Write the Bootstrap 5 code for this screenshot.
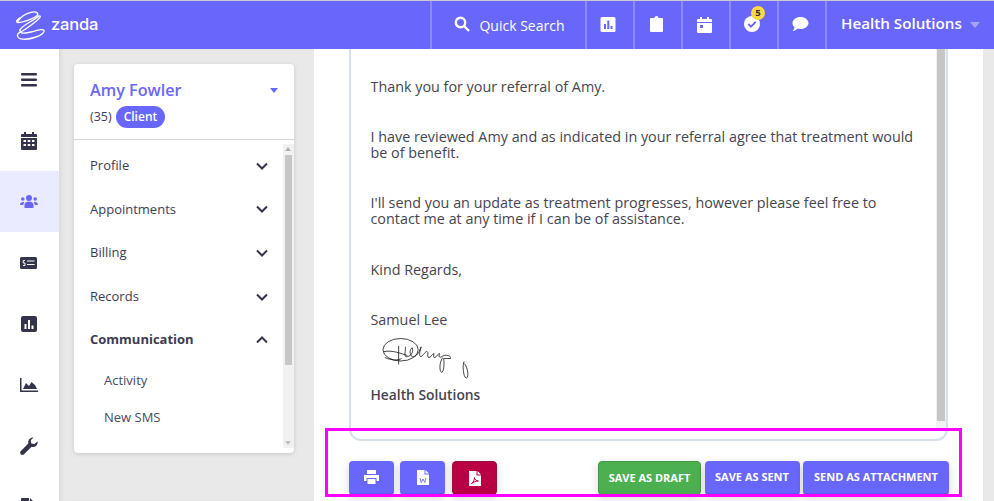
<!DOCTYPE html>
<html lang="en"><head><meta charset="utf-8"><title>Zanda</title>
<link href="https://cdn.jsdelivr.net/npm/bootstrap@5.3.0/dist/css/bootstrap.min.css" rel="stylesheet">
<style>
html,body{height:501px;overflow:hidden}
body{font-family:"Open Sans","Noto Sans",sans-serif;color:#3c3c50;background:#fff;font-size:14px}
.topline{height:1px;background:#c9c9d6}
.zbar{height:48px;background:#6966fb;color:#fff}
.brand-txt{font-family:"Inter","Open Sans",sans-serif;font-size:16.5px;font-weight:500;margin-left:5px;letter-spacing:-.2px;position:relative;top:-1px}
.zbrand{padding-left:15px;width:430px}
.zcell{height:48px;border-left:2px solid #8c8afc;display:flex;align-items:center;justify-content:center}
.c-search{width:155px;font-size:14px;padding:0 0 2px 2px}
.qs-txt{top:1px;margin-left:9px}
.c-ic{width:48px;padding:0 4px 2px 0}
.c-org{flex:1;font-size:15.2px;font-weight:600;justify-content:flex-start;padding:0 0 3px 14px}
.zcaret{width:0;height:0;border-left:5.5px solid transparent;border-right:5.5px solid transparent;border-top:6px solid #a5a4fc;margin-left:8px;margin-top:2px}
.zrail{width:59px;background:#fff;overflow:hidden}
.railitem{height:61px;display:flex;align-items:center;justify-content:center;padding-right:2px}
.railitem.on{background:#ebebff}
.graypane{width:255px;background:#e9e9e9;box-shadow:inset 4px 0 4px -2px #d9d9d9;padding:15px 20px 0 15px}
.zcardp{width:220px;height:389px;background:#fff;border-radius:4px;box-shadow:0 1px 4px rgba(0,0,0,.15);overflow:hidden;position:relative}
.phead{height:76px;padding:14px 16px 0;border-bottom:1px solid #d5d5d5}
.pname{font-size:16.2px;font-weight:600;color:#6966fb;line-height:24px}
.ptop{font-size:12.5px}
.ztag{background:#6966fb;color:#fff;font-weight:600;font-size:12px;border-radius:11px;padding:3px 8px;line-height:16px;display:inline-block}
.pcaret{width:0;height:0;border-left:4px solid transparent;border-right:4px solid transparent;border-top:5px solid #6966fb}
.plist{width:210px;padding:4px 16px 0}
.pitem{height:43.6px;display:flex;align-items:center;justify-content:space-between;font-size:13px;color:#3c3c50}
.psub{padding-left:14px;font-size:13px;height:37px;display:flex;align-items:center;color:#4a4a60}
.pscroll{position:absolute;right:0;top:80px;bottom:5px;width:11px;background:#f1f1f1}
.pthumb{position:absolute;top:11px;left:2px;width:7px;height:210px;background:#c6c6c6}
.parw{position:absolute;left:2px;width:0;height:0;border-left:3.500px solid transparent;border-right:3.500px solid transparent}
.parw-up{top:3px;border-bottom:4px solid #b0b0b0}
.parw-dn{bottom:3px;border-top:4px solid #c0c0c0}
.zmain{flex:1;background:#fff;padding-left:35px;position:relative}
.letter{width:599px;height:392px;border:2px solid #d6e0ec;border-top:0;border-radius:0 0 12px 12px;padding:0 30px 0 19.500px;position:relative;font-size:14.35px;line-height:16px;color:#45454f}
.letter p{margin:0}
.lp1{padding-top:30px}
.lp2{padding-top:34px}
.lp3{padding-top:35px}
.lsig{margin:10px 0 0 11px}
.lorg{font-weight:600;font-size:13.8px;margin-top:4px!important}
.lscroll{position:absolute;right:0;top:0;bottom:10px;width:10px;background:#f1f1f1}
.lthumb{position:absolute;top:0;left:1px;width:8px;height:372px;background:#c6c6c6}
.bbar{padding-top:20px;width:600px}
.zbtn{height:34px;border:0;border-bottom:2px solid #5e5bff;border-radius:4px;background:#6966fb;color:#fff;font-size:11px;font-weight:700;box-shadow:0 3px 8px rgba(0,0,0,.16);padding:0 8px;display:flex;align-items:center;justify-content:center;white-space:nowrap}
.zsq{width:45px}
.zred{background:#b90045;border:1px solid #93103f;margin-left:1px}
.zgreen{background:#4caf50;border:1px solid #429a46;width:103px}
.zw-sent{width:95px}
.zw-att{width:146px}
.zgap-a{gap:6px}
.zgap-b{gap:3.5px}
.zframe{position:absolute;left:325px;top:428px;width:637px;height:69px;border:3px solid #f0f;pointer-events:none}
.rstrip{width:11px;background:#e9e9e9}
.zbadge{position:absolute;top:-10px;right:-5px;width:14px;height:14px;border-radius:50%;background:#fdd83f;color:#333;font-size:9.500px;font-weight:700;line-height:14px;text-align:center}
.zrow{height:452px}
</style></head><body>
<div class="topline"></div>
<nav class="zbar d-flex align-items-center">
 <div class="zbrand d-flex align-items-center">
  <svg width="31" height="31" viewBox="0 0 32 32" fill="none" stroke="#fff" stroke-width="1.400"><path d="M3 12C6 5 19 0 23 3C27 7 8 13 3 13C0 12 3 9 6 8M25 6C31 6 10 21 5 23C1 25 2 30 8 30C16 31 29 26 30 22C31 18 20 22 15 23C10 24 5 25 5 21C6 16 20 11 25 6Z"/></svg>
  <span class="brand-txt">zanda</span>
 </div>
 <div class="zcell c-search"><svg width="16" height="16" viewBox="0 0 16 16" fill="none" stroke="#fff" stroke-width="2.400"><circle cx="6.500" cy="6.500" r="4.700"/><path d="M10 10l5 5"/></svg><span class="qs-txt position-relative">Quick Search</span></div>
 <div class="zcell c-ic"><svg width="16" height="15" viewBox="0 0 15 15"><rect width="15" height="15" rx="1.500" fill="#fff"/><path d="M3.500 7h2v5h-2zM6.800 3.500h2V12h-2zM10 9h2v3h-2z" fill="#6966fb"/></svg></div>
 <div class="zcell c-ic"><svg width="13" height="16" viewBox="0 0 13 16"><path d="M1 2h3.500a2 2 0 0 1 4 0H12a1 1 0 0 1 1 1v12a1 1 0 0 1-1 1H1a1 1 0 0 1-1-1V3a1 1 0 0 1 1-1z" fill="#fff"/></svg></div>
 <div class="zcell c-ic"><svg width="15" height="17" viewBox="0 0 15 17"><path d="M0 4a1 1 0 0 1 1-1h2V1h2v2h5V1h2v2h2a1 1 0 0 1 1 1v2H0zM0 7h15v9a1 1 0 0 1-1 1H1a1 1 0 0 1-1-1zm3 2v3h3V9z" fill="#fff"/></svg></div>
 <div class="zcell c-ic"><span class="position-relative d-inline-flex"><svg width="16" height="16" viewBox="0 0 15 15"><circle cx="7.500" cy="7.500" r="7.500" fill="#fff"/><path d="M4 7.500l2.500 2.500L11 5.500" fill="none" stroke="#6966fb" stroke-width="1.800"/></svg><span class="zbadge">5</span></span></div>
 <div class="zcell c-ic"><svg width="17" height="14" viewBox="0 0 16 14"><path d="M8 0c4.400 0 8 2.700 8 6s-3.600 6-8 6c-1 0-2-.1-2.800-.4C4.200 12.600 2.500 14 0 14c1-1 1.800-2.200 2-3.500C.8 9.300 0 7.700 0 6c0-3.300 3.600-6 8-6z" fill="#fff"/></svg></div>
 <div class="zcell c-org">Health Solutions<span class="zcaret"></span></div>
</nav>
<div class="d-flex zrow">
 <div class="zrail flex-shrink-0">
  <div class="railitem"><svg width="16" height="14" viewBox="0 0 16 14" fill="#33334a"><rect width="16" height="2.500" rx="1"/><rect y="5.500" width="16" height="2.500" rx="1"/><rect y="11" width="16" height="2.500" rx="1"/></svg></div>
  <div class="railitem"><svg width="16" height="18" viewBox="0 0 16 18" fill="#33334a"><path d="M1 2h2V0h2v2h6V0h2v2h2a1 1 0 0 1 1 1v2H0V3a1 1 0 0 1 1-1zM0 6h16v11a1 1 0 0 1-1 1H1a1 1 0 0 1-1-1zm2.500 2v2h2.500V8zm4.200 0v2h2.600V8zm4.300 0v2h2.500V8zM2.500 12v2h2.500v-2zm4.200 0v2h2.600v-2zm4.300 0v2h2.500v-2z" fill-rule="evenodd"/></svg></div>
  <div class="railitem on"><svg width="18" height="13" viewBox="0 0 18 13" fill="#6966fb"><circle cx="9" cy="3" r="3"/><circle cx="2.800" cy="4" r="1.800"/><circle cx="15.200" cy="4" r="1.800"/><path d="M4.500 13V10c0-2 2-3.500 4.500-3.500s4.500 1.500 4.500 3.500v3zM0 10c0-2 1.300-3 3-3 .6 0 1 .1 1.300.4C3.700 8 3.300 9 3.300 10H0zM18 10c0-2-1.300-3-3-3-.6 0-1 .1-1.300.4.600.6 1 1.600 1 2.600z"/></svg></div>
  <div class="railitem"><svg width="17" height="12" viewBox="0 0 17 12"><rect width="17" height="12" rx="1.500" fill="#33334a"/><path d="M7 4h7.500M7 7.500h7.500" stroke="#fff" stroke-width="1.200"/><path d="M5 3.500H3.200v2.500H5v2.500H3" fill="none" stroke="#fff" stroke-width="1"/></svg></div>
  <div class="railitem"><svg width="16" height="16" viewBox="0 0 16 16"><rect width="16" height="16" rx="2" fill="#33334a"/><path d="M3.500 8h2v5h-2zM7 4h2v9H7zM10.500 9.500h2V13h-2z" fill="#fff"/></svg></div>
  <div class="railitem"><svg width="18" height="14" viewBox="0 0 18 14" fill="#33334a"><path d="M0 0h1.500v12.500H18V14H0zM3 11l3-6 3 3 2.500-4L15 7l2 4z"/></svg></div>
  <div class="railitem"><svg width="18" height="18" viewBox="0 0 18 18" fill="#33334a"><path d="M17.500 4.500c.6 2.400-1 5.500-4.500 5.500-.7 0-1.100-.1-1.400-.2L4 17.200c-1 1-2.300 1-3.200.1-.9-.9-.9-2.200.1-3.200L8.300 6.400C7.700 3.600 10 .2 13.500.5l-2.700 2.700.5 3.200 3.200.5z"/></svg></div>
  <div class="railitem"><svg width="16" height="18" viewBox="0 0 16 18" fill="#33334a"><path d="M0 1a1 1 0 0 1 1-1h7v5h5v13H1a1 1 0 0 1-1-1zM9 0l4 4H9zM10 8l6 4-6 4z"/></svg></div>
 </div>
 <div class="graypane flex-shrink-0">
  <div class="zcardp">
   <div class="phead">
    <div class="d-flex justify-content-between align-items-center"><span class="pname">Amy Fowler</span><span class="pcaret"></span></div>
    <div class="ptop d-flex align-items-center gap-1 mt-1">(35) <span class="ztag">Client</span></div>
   </div>
   <div class="plist">
    <div class="pitem">Profile<svg width="12" height="8" viewBox="0 0 12 8" fill="none" stroke="#33334a" stroke-width="2"><path d="M1 1.500l5 5 5-5"/></svg></div>
    <div class="pitem">Appointments<svg width="12" height="8" viewBox="0 0 12 8" fill="none" stroke="#33334a" stroke-width="2"><path d="M1 1.500l5 5 5-5"/></svg></div>
    <div class="pitem">Billing<svg width="12" height="8" viewBox="0 0 12 8" fill="none" stroke="#33334a" stroke-width="2"><path d="M1 1.500l5 5 5-5"/></svg></div>
    <div class="pitem">Records<svg width="12" height="8" viewBox="0 0 12 8" fill="none" stroke="#33334a" stroke-width="2"><path d="M1 1.500l5 5 5-5"/></svg></div>
    <div class="pitem fw-bold">Communication<svg width="12" height="8" viewBox="0 0 12 8" fill="none" stroke="#33334a" stroke-width="2"><path d="M1 6.500l5-5 5 5"/></svg></div>
    <div class="psub">Activity</div>
    <div class="psub">New SMS</div>
   </div>
   <div class="pscroll"><span class="parw parw-up"></span><div class="pthumb"></div><span class="parw parw-dn"></span></div>
  </div>
 </div>
 <div class="zmain">
  <div class="letter">
   <p class="lp1">Thank you for your referral of Amy.</p>
   <p class="lp2">I have reviewed Amy and as indicated in your referral agree that treatment would be of benefit.</p>
   <p class="lp2">I'll send you an update as treatment progresses, however please feel free to contact me at any time if I can be of assistance.</p>
   <p class="lp3">Kind Regards,</p>
   <p class="lp2">Samuel Lee</p>
   <svg class="d-block lsig" width="90" height="45" viewBox="0 0 92 46" fill="none" stroke="#111" stroke-width=".8"><ellipse cx="19" cy="12" rx="18" ry="11.500"/><path d="M2 14c8-2 18 2 24 4M17 8v19M3 20c7 3 13 3 17 1M24 9c0 6-2 11 2 10 5-1 6-6 5-9-3 1-3 8 0 9 3 1 5-2 7-5l2-5c-1 4-3 10 0 10 3-1 5-8 7-4 0 2-1 5 1 5s3-4 5-4c0 2-1 4 1 4 2-1 3-4 5-4-1 2-1 5 2 3 2-1 4-2 7-1 1 0 2 1 2 3h-7M62 20c-4 6-3 15-1 15s3-8 2-14M84 24c-2 3-1 16 2 17 3 0 2-11-2-15"/></svg>
   <p class="lorg">Health Solutions</p>
   <div class="lscroll"><div class="lthumb"></div></div>
  </div>
  <div class="bbar d-flex justify-content-between">
   <div class="d-flex zgap-a">
    <button class="zbtn zsq"><svg width="15" height="14" viewBox="0 0 15 14" fill="#fff"><path d="M3 0h9v4H3zM0 5h15v6h-2.500V8h-10v3H0zM3.500 9h8v5h-8z"/></svg></button>
    <button class="zbtn zsq"><svg width="12" height="15" viewBox="0 0 12 15"><path d="M0 0h7.500v4.500H12V15H0zM8.500 0L12 3.500H8.500z" fill="#fff"/><path d="M3 8l1.200 4.500L6 9l1.800 3.500L9 8" fill="none" stroke="#6966fb" stroke-width=".9"/></svg></button>
    <button class="zbtn zsq zred"><svg width="12" height="15" viewBox="0 0 12 15"><path d="M0 0h7.500v4.500H12V15H0zM8.500 0L12 3.500H8.500z" fill="#fff"/><path d="M2.500 12.500c2-1 3-4 3-6 0 2 1.500 3.500 4 3.500-2.500 0-5 1-7 2.500z" fill="none" stroke="#b90045"/></svg></button>
   </div>
   <div class="d-flex zgap-b">
    <button class="zbtn zgreen">SAVE AS DRAFT</button>
    <button class="zbtn zw-sent">SAVE AS SENT</button>
    <button class="zbtn zw-att">SEND AS ATTACHMENT</button>
   </div>
  </div>
 </div>
 <div class="rstrip flex-shrink-0"></div>
</div>
<div class="zframe"></div>
</body></html>
